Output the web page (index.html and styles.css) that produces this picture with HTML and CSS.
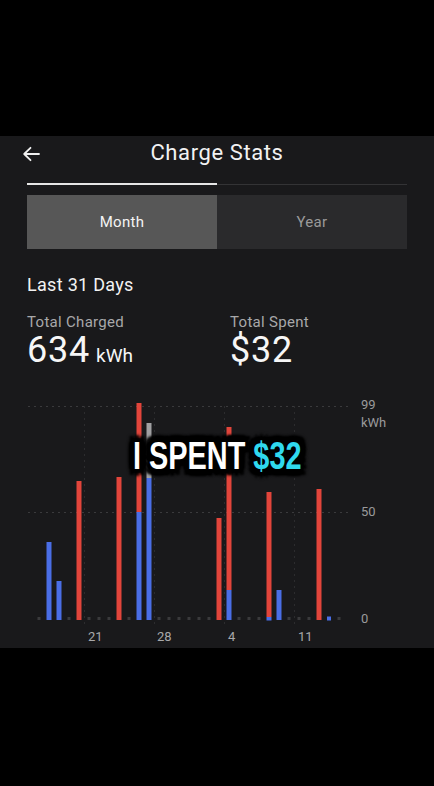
FILE: index.html
```html
<!DOCTYPE html>
<html>
<head>
<meta charset="utf-8">
<link rel="stylesheet" href="styles.css">
</head>
<body>
<div class="top-black"></div>
<main class="panel">
  <header class="header">
    <svg class="back" width="18" height="16" viewBox="0 0 18 16"><path d="M17 8H2.5M8.5 1.8L2.2 8l6.3 6.2" fill="none" stroke="#f0f0f0" stroke-width="1.8" stroke-linecap="round" stroke-linejoin="round"/></svg>
    <h1 class="title">Charge Stats</h1>
  </header>
  <div class="tabline"><div class="tabline-on"></div><div class="tabline-off"></div></div>
  <div class="segment">
    <div class="seg seg-on">Month</div>
    <div class="seg seg-off">Year</div>
  </div>
  <h2 class="period">Last 31 Days</h2>
  <div class="totals">
    <div class="total total-first">
      <div class="total-label">Total Charged</div>
      <div class="total-value">634<span class="unit">kWh</span></div>
    </div>
    <div class="total">
      <div class="total-label">Total Spent</div>
      <div class="total-value">$32</div>
    </div>
  </div>
  <div class="chart">
    <svg class="chart-svg" width="380" height="252" viewBox="27 396 380 252">
      <g stroke="#3a3a3c" stroke-width="1" stroke-dasharray="2 4">
        <line x1="28" y1="406.5" x2="350" y2="406.5"/>
        <line x1="28" y1="512.5" x2="350" y2="512.5"/>
        <line x1="84.5" y1="406" x2="84.5" y2="628" stroke="#2c2c2e"/>
        <line x1="154.5" y1="406" x2="154.5" y2="628" stroke="#2c2c2e"/>
        <line x1="224.5" y1="406" x2="224.5" y2="628" stroke="#2c2c2e"/>
        <line x1="294.5" y1="406" x2="294.5" y2="628" stroke="#2c2c2e"/>
      </g>
      <g fill="#3a3a3c">
        <rect x="37.5" y="617" width="3" height="3"/>
        <rect x="67.5" y="617" width="3" height="3"/>
        <rect x="87.5" y="617" width="3" height="3"/>
        <rect x="97.5" y="617" width="3" height="3"/>
        <rect x="107.5" y="617" width="3" height="3"/>
        <rect x="127.5" y="617" width="3" height="3"/>
        <rect x="157.5" y="617" width="3" height="3"/>
        <rect x="167.5" y="617" width="3" height="3"/>
        <rect x="177.5" y="617" width="3" height="3"/>
        <rect x="187.5" y="617" width="3" height="3"/>
        <rect x="197.5" y="617" width="3" height="3"/>
        <rect x="207.5" y="617" width="3" height="3"/>
        <rect x="237.5" y="617" width="3" height="3"/>
        <rect x="247.5" y="617" width="3" height="3"/>
        <rect x="257.5" y="617" width="3" height="3"/>
        <rect x="287.5" y="617" width="3" height="3"/>
        <rect x="297.5" y="617" width="3" height="3"/>
        <rect x="307.5" y="617" width="3" height="3"/>
        <rect x="337.5" y="617" width="3" height="3"/>
      </g>
      <g>
        <rect x="46.5" y="542" width="5" height="78" fill="#4a6ee6"/>
        <rect x="56.5" y="581" width="5" height="39" fill="#4a6ee6"/>
        <rect x="76.5" y="481" width="5" height="139" fill="#e2453b"/>
        <rect x="116.5" y="477" width="5" height="143" fill="#e2453b"/>
        <rect x="136.5" y="403" width="5" height="109" fill="#e2453b"/>
        <rect x="136.5" y="512" width="5" height="108" fill="#4a6ee6"/>
        <rect x="146.5" y="423" width="5" height="55" fill="#a0a0a2"/>
        <rect x="146.5" y="478" width="5" height="142" fill="#4a6ee6"/>
        <rect x="216.5" y="518" width="5" height="102" fill="#e2453b"/>
        <rect x="226.5" y="427" width="5" height="163" fill="#e2453b"/>
        <rect x="226.5" y="590" width="5" height="30" fill="#4a6ee6"/>
        <rect x="266.5" y="492" width="5" height="125" fill="#e2453b"/>
        <rect x="266.5" y="617" width="5" height="3.5" fill="#4a6ee6"/>
        <rect x="276.5" y="590" width="5" height="30" fill="#4a6ee6"/>
        <rect x="316.5" y="489" width="5" height="131" fill="#e2453b"/>
        <rect x="327" y="616.5" width="4" height="4" fill="#4a6ee6"/>
      </g>
      <g class="axis-y" fill="#9a9a9c">
        <text x="361" y="409">99</text>
        <text x="361" y="427">kWh</text>
        <text x="361" y="516">50</text>
        <text x="361" y="623">0</text>
      </g>
      <g class="axis-x" fill="#a8a8aa">
        <text x="88" y="641">21</text>
        <text x="157" y="641">28</text>
        <text x="228" y="641">4</text>
        <text x="298" y="641">11</text>
      </g>
    </svg>
    <div class="caption">I SPENT <span class="cyan">$32</span></div>
  </div>
</main>
</body>
</html>
```
FILE: styles.css
```css
html, body {
  margin: 0;
  padding: 0;
  background: #000;
}
body {
  width: 434px;
  height: 786px;
  overflow: hidden;
  font-family: Roboto, "Noto Sans", sans-serif;
  color: #f2f2f2;
}
.top-black {
  height: 136px;
}
.panel {
  height: 512px;
  background: #19191b;
  padding: 0 27px;
  box-sizing: border-box;
  display: flex;
  flex-direction: column;
  overflow: hidden;
}
.header {
  height: 34px;
  display: flex;
  align-items: center;
  justify-content: center;
  position: relative;
}
.back {
  position: absolute;
  left: -5px;
  top: 10px;
}
.title {
  margin: 0;
  font-size: 22px;
  font-weight: 400;
  letter-spacing: 0.6px;
}
.tabline {
  margin-top: 13px;
  height: 2px;
  display: flex;
}
.tabline-on {
  flex: 1;
  background: #e6e6e6;
}
.tabline-off {
  flex: 1;
  height: 1px;
  margin-top: 1px;
  background: #333335;
}
.segment {
  margin-top: 10px;
  height: 55px;
  display: flex;
}
.seg {
  flex: 1;
  display: flex;
  align-items: center;
  justify-content: center;
  font-size: 15px;
  letter-spacing: 0.3px;
}
.seg-on {
  background: #575757;
  color: #f4f4f4;
}
.seg-off {
  background: #2a2a2c;
  color: #9a9a9a;
}
.period {
  margin: 25px 0 0;
  font-size: 18px;
  font-weight: 400;
  line-height: 22px;
  letter-spacing: 0.3px;
}
.totals {
  margin-top: 17px;
  display: flex;
}
.total {
  flex: 1 1 auto;
}
.total-first {
  flex: 0 0 203px;
}
.total-label {
  font-size: 15px;
  line-height: 18px;
  color: #a8a8aa;
  letter-spacing: 0.3px;
}
.total-value {
  font-size: 36px;
  line-height: 38px;
  color: #f6f6f6;
  letter-spacing: 0.8px;
}
.unit {
  font-size: 19px;
  margin-left: 6px;
  letter-spacing: 0;
}
.chart {
  position: relative;
  margin: 21px -27px 0 0;
  height: 252px;
  flex: 0 0 auto;
}
.chart-svg {
  display: block;
}
.axis-y text, .axis-x text {
  font-family: Roboto, "Noto Sans", sans-serif;
  font-size: 13px;
}
.caption {
  position: absolute;
  left: 106px;
  top: 38px;
  font-family: "Liberation Sans", Arial, sans-serif;
  font-weight: 700;
  font-size: 38px;
  line-height: 44px;
  color: #fff;
  white-space: nowrap;
  transform: scaleX(0.76);
  transform-origin: 0 50%;
  text-shadow:
    0 0 3px #000, 0 0 3px #000,
    4px 0 2px #000, -4px 0 2px #000, 0 4px 2px #000, 0 -4px 2px #000,
    4px 4px 2px #000, -4px 4px 2px #000, 4px -4px 2px #000, -4px -4px 2px #000,
    8px 0 3px #000, -8px 0 3px #000, 0 7px 3px #000, 0 -7px 3px #000,
    7px 6px 3px #000, -7px 6px 3px #000, 7px -6px 3px #000, -7px -6px 3px #000;
}
.cyan {
  color: #2fd9ee;
}
```
